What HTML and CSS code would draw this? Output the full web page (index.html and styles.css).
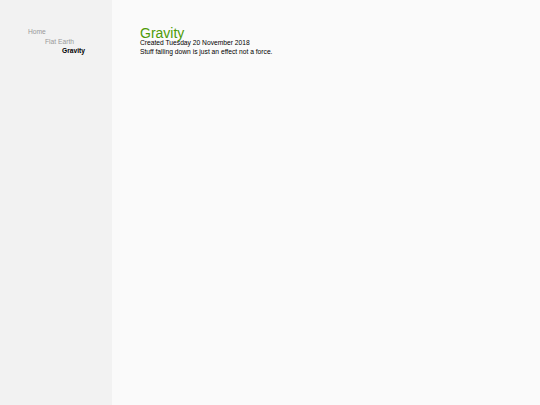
FILE: index.html
```html
<!DOCTYPE html>
<html>
<head>
<meta charset="utf-8">
<link rel="stylesheet" href="styles.css">
</head>
<body>
<div class="layout">
  <nav class="sidebar">
    <ul class="tree">
      <li><a class="link">Home</a>
        <ul>
          <li><a class="link">Flat Earth</a>
            <ul>
              <li><a class="link current">Gravity</a></li>
            </ul>
          </li>
        </ul>
      </li>
    </ul>
  </nav>
  <main class="content">
    <h1 class="title">Gravity</h1>
    <div class="meta">Created Tuesday 20 November 2018</div>
    <p class="body">Stuff falling down is just an effect not a force.</p>
  </main>
</div>
</body>
</html>
```
FILE: styles.css
```css
html, body { margin: 0; padding: 0; height: 100%; }
body { font-family: "Liberation Sans", Arial, sans-serif; background: #fafafa; color: #000; }
.layout { display: flex; min-height: 405px; }
.sidebar { width: 112px; background: #f2f2f2; padding-top: 27px; box-sizing: border-box; }
.tree, .tree ul { list-style: none; margin: 0; padding: 0; }
.tree { padding-left: 28px; }
.tree ul { padding-left: 17px; }
.link { display: block; font-size: 6.7px; line-height: 9.5px; color: #999; }
.current { color: #000; font-weight: bold; }
.content { padding: 28.5px 0 0 28px; }
.title { margin: 0; font-weight: normal; font-size: 14px; line-height: 9px; color: #4e9a06; }
.meta { font-size: 6.7px; line-height: 9px; }
.body { margin: 0; font-size: 6.7px; line-height: 9px; }
```
